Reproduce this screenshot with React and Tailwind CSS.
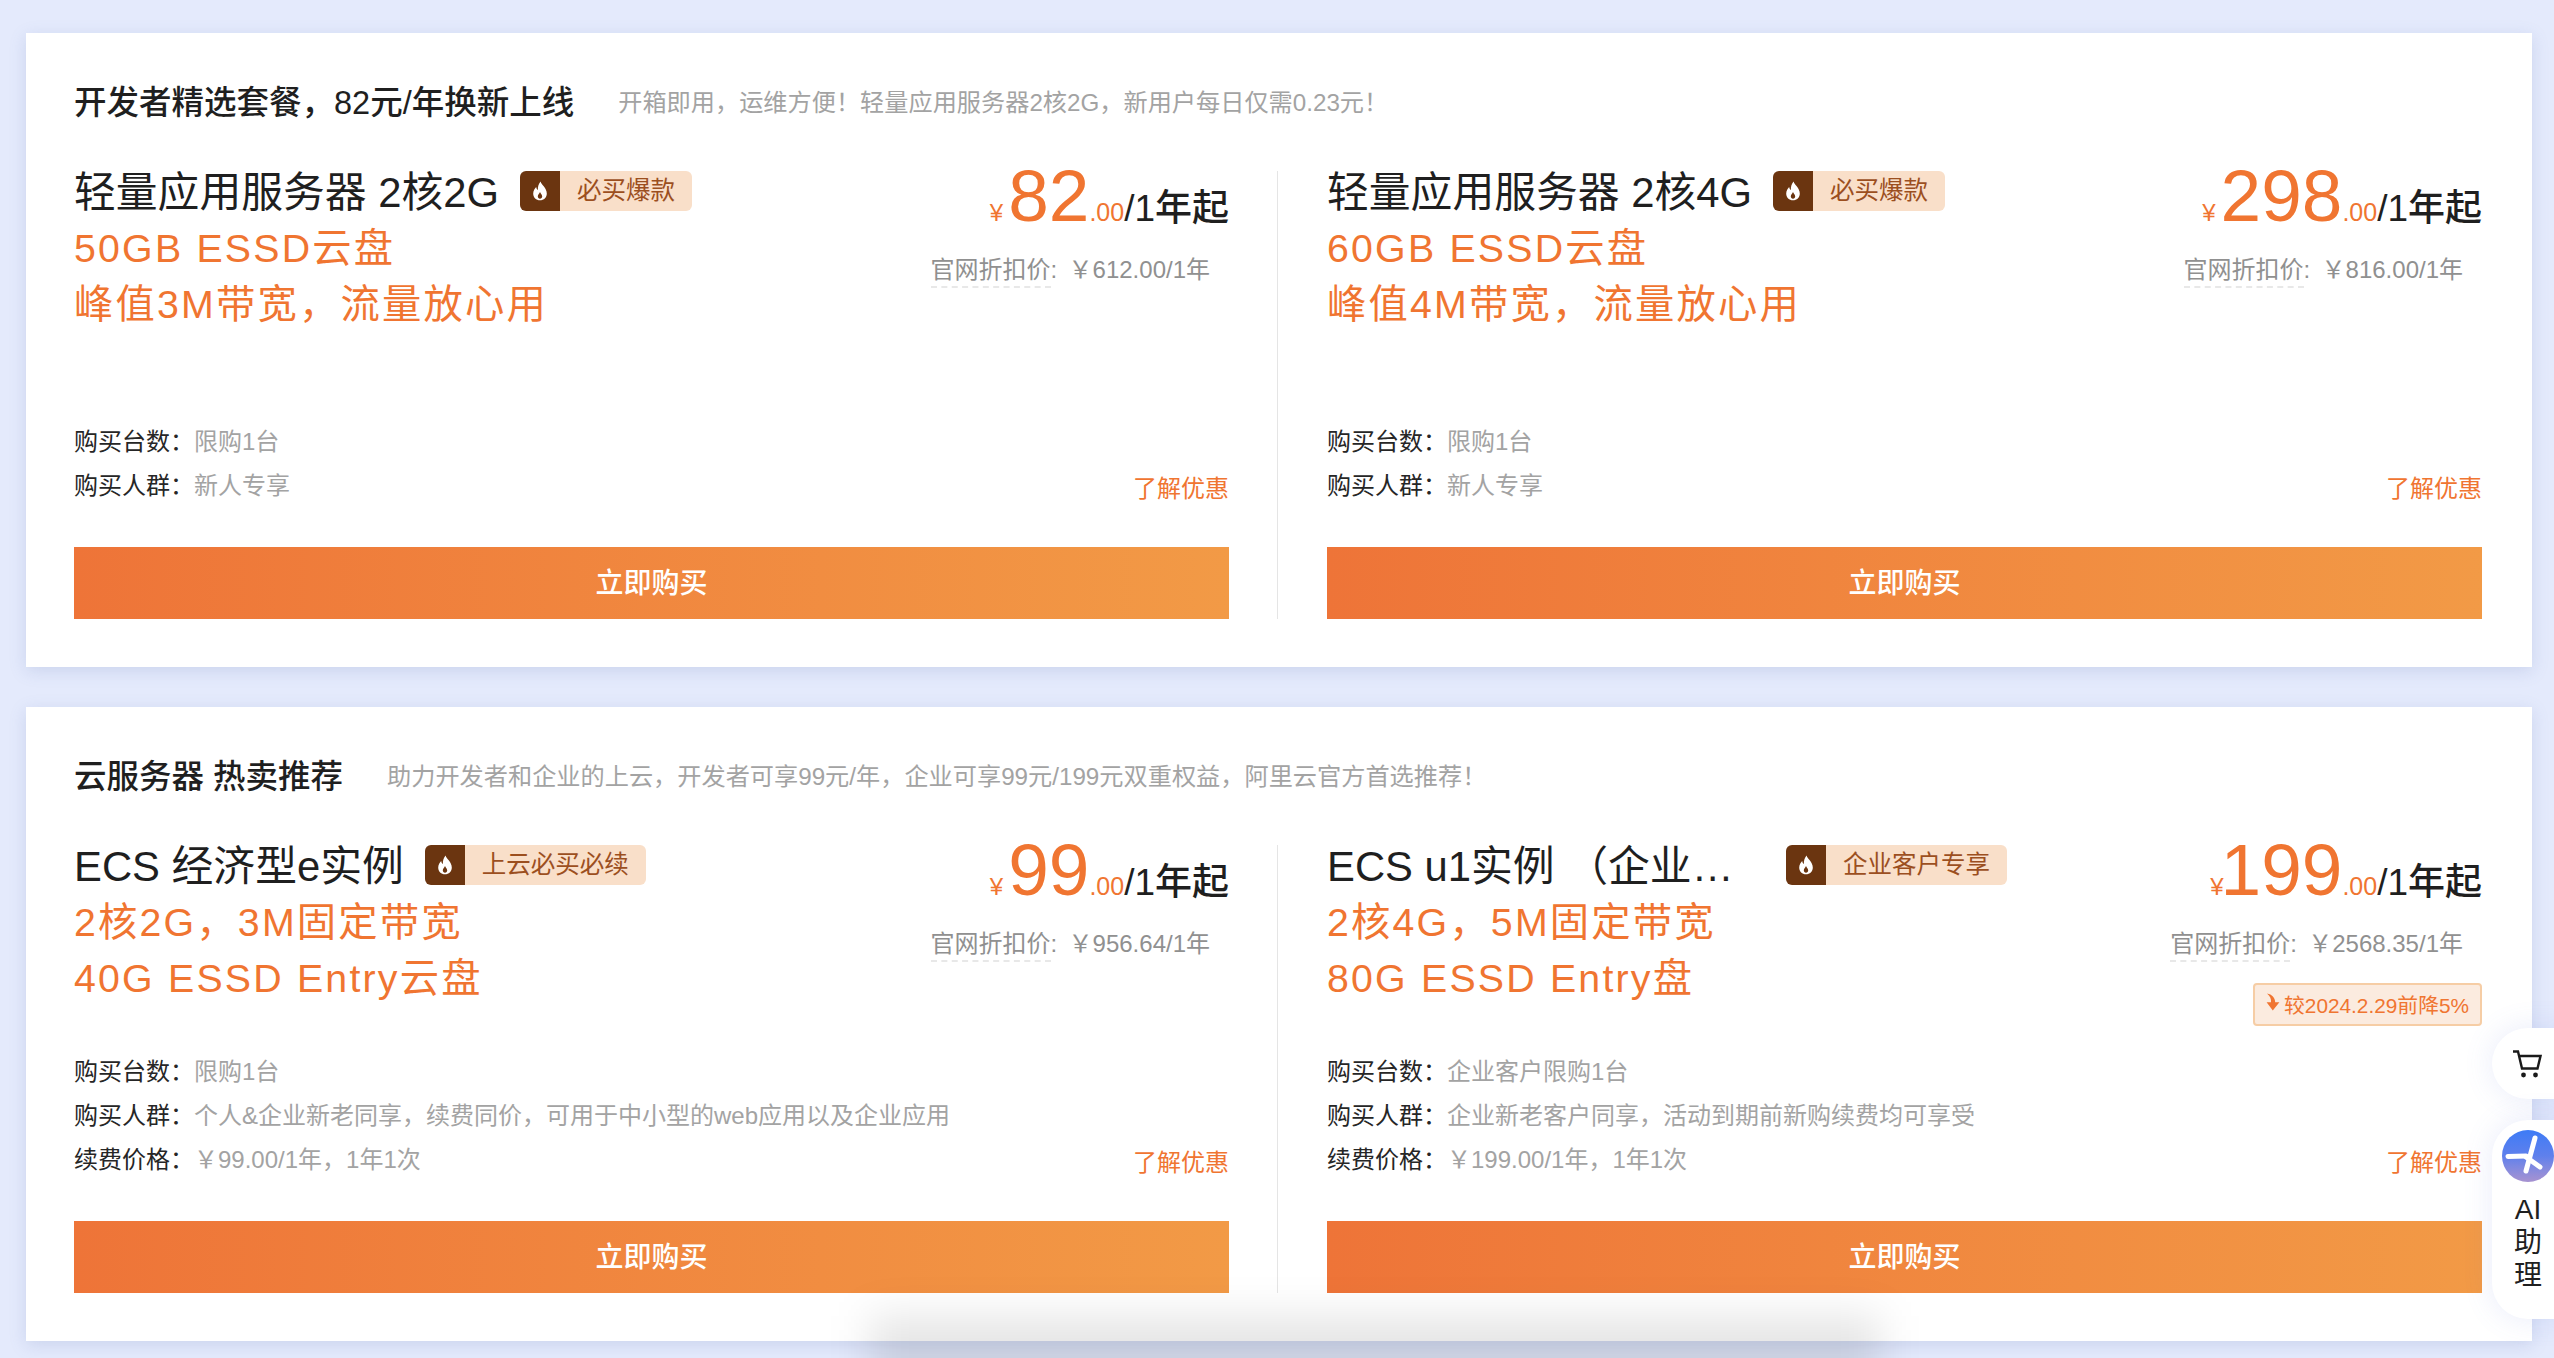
const FONT = 'font-["Liberation_Sans","Noto_Sans_CJK_SC",sans-serif]';

const FlameIcon = () => (
    <svg width="16" height="20" viewBox="0 0 16 20" fill="none">
        <path d="M8.6 0.5C9.2 3.6 14.8 7 14.8 12.4C14.8 16.4 11.8 19.2 8 19.2C4.2 19.2 1.2 16.4 1.2 12.4C1.2 9.6 2.8 7.6 4.2 6C4.4 7.6 5 8.6 5.9 9C5.6 5.8 6.8 2.6 8.6 0.5Z" fill="#fff" />
        <path d="M8 11C8.8 12.8 10.2 13.6 10.2 15.6C10.2 16.8 9.3 17.8 8 17.8C6.7 17.8 5.8 16.8 5.8 15.6C5.8 13.8 7.2 12.8 8 11Z" fill="#6b3510" />
    </svg>
);

const DownArrow = () => (
    <svg width="14" height="18" viewBox="0 0 14 18" fill="#f07531" className="-mt-[6px]">
        <path d="M1 0.5C6 1.5 9 4.5 9.2 9.2H13.4L6.8 17.5L0.6 9.2H5C5.4 6 4 3 1 0.5Z" />
    </svg>
);

const CartIcon = () => (
    <svg width="29" height="28" viewBox="0 0 29 28" fill="none" stroke="#1a1a1a" strokeWidth="2.4">
        <path d="M0 1.5H5L9 18.5H24.5L27.5 6H6" />
        <circle cx="10.5" cy="25" r="2.4" fill="#1a1a1a" stroke="none" />
        <circle cx="22.5" cy="25" r="2.4" fill="#1a1a1a" stroke="none" />
    </svg>
);

const AiLogo = () => (
    <div className="w-[52px] h-[52px] rounded-full bg-gradient-to-b from-[#3c7bf6] via-[#5f80ec] to-[#a792d0]">
        <svg width="52" height="52" viewBox="0 0 52 52" fill="none" stroke="#fff" strokeWidth="5" strokeLinecap="round">
            <path d="M6 26.5L24 26" />
            <path d="M33 8L24 41" />
            <path d="M24 27L38 37" />
        </svg>
    </div>
);

const plans = [
    [
        {
            title: '轻量应用服务器 2核2G', tag: '必买爆款', lines: ['50GB ESSD云盘', '峰值3M带宽，流量放心用'],
            price: '82', yenGap: 'mr-[5px]', official: '￥612.00/1年',
            info: [['购买台数：', '限购1台'], ['购买人群：', '新人专享']],
        },
        {
            title: '轻量应用服务器 2核4G', tag: '必买爆款', lines: ['60GB ESSD云盘', '峰值4M带宽，流量放心用'],
            price: '298', yenGap: 'mr-[5px]', official: '￥816.00/1年',
            info: [['购买台数：', '限购1台'], ['购买人群：', '新人专享']],
        },
    ],
    [
        {
            title: 'ECS 经济型e实例', tag: '上云必买必续', lines: ['2核2G，3M固定带宽', '40G ESSD Entry云盘'],
            price: '99', yenGap: 'mr-[5px]', official: '￥956.64/1年',
            info: [['购买台数：', '限购1台'], ['购买人群：', '个人&企业新老同享，续费同价，可用于中小型的web应用以及企业应用'], ['续费价格：', '￥99.00/1年，1年1次']],
        },
        {
            title: 'ECS u1实例 （企业客户专享）', tag: '企业客户专享', lines: ['2核4G，5M固定带宽', '80G ESSD Entry盘'],
            price: '199', yenGap: '-mr-[3px]', official: '￥2568.35/1年', drop: '较2024.2.29前降5%',
            info: [['购买台数：', '企业客户限购1台'], ['购买人群：', '企业新老客户同享，活动到期前新购续费均可享受'], ['续费价格：', '￥199.00/1年，1年1次']],
        },
    ],
];

const PlanColumn = ({ plan }) => (
    <div className="flex-1 min-w-0 h-[448px] flex flex-col">
        <div className="flex-1 flex justify-between min-h-0">
            {/* left: name, specs, purchase limits */}
            <div className="flex flex-col justify-between min-w-0 flex-1">
                <div>
                    <div className="flex items-center h-[40px]">
                        <span className="max-w-[438px] truncate pt-[4px] text-[41.8px] leading-[56px] text-[#1f1f1f]">{plan.title}</span>
                        <div className="ml-[21px] flex h-[40px] rounded-[6px] overflow-hidden shrink-0">
                            <span className="w-[40px] bg-[#6b3510] flex items-center justify-center"><FlameIcon /></span>
                            <span className="bg-[#f9dfc9] text-[#9c4f1f] text-[24.5px] leading-[40px] px-[17px]">{plan.tag}</span>
                        </div>
                    </div>
                    <div className="mt-[9px] text-[39.3px] tracking-[2.2px] leading-[56px] text-[#f07531]">
                        {plan.lines.map((line) => <div key={line}>{line}</div>)}
                    </div>
                </div>
                <div className="-mb-[2px]">
                    {plan.info.map(([label, value]) => (
                        <div key={label} className="flex text-[24px] leading-[44px] whitespace-nowrap">
                            <span className="text-[#262626] w-[120px] shrink-0">{label}</span>
                            <span className="text-[#a3a3a3]">{value}</span>
                        </div>
                    ))}
                </div>
            </div>
            {/* right: price block and link */}
            <div className="flex flex-col items-end justify-between shrink-0">
                <div className="flex flex-col items-end">
                    <div className="flex items-baseline -mt-[10px] h-[70px] leading-[70px] text-[#f07531]">
                        <span className={`text-[24px] ${plan.yenGap}`}>¥</span>
                        <span className="text-[73px]">{plan.price}</span>
                        <span className="text-[25px]">.00</span>
                        <span className="text-[37px] font-medium text-[#1f1f1f]">/1年起</span>
                    </div>
                    <div className="mt-[23px] pr-[19px] flex text-[24px] leading-[32px] text-[#909090]">
                        <span className="w-[120px] border-b-2 border-dashed border-[#e8e8e8] h-[34px]">官网折扣价</span>
                        <span className="w-[18px]">:</span>
                        <span>{plan.official}</span>
                    </div>
                    {plan.drop && (
                        <div className="mt-[21px] h-[43px] flex items-center gap-[4px] px-[11px] border-2 border-[#f6cda5] bg-[#fbebdf] rounded-[4px] text-[20.8px] text-[#f07531]">
                            <DownArrow />
                            <span className="pt-[3px]">{plan.drop}</span>
                        </div>
                    )}
                </div>
                <a className="text-[24px] leading-[34px] text-[#f07531]">了解优惠</a>
            </div>
        </div>
        <button className="mt-[41px] h-[72px] pt-[2px] shrink-0 bg-gradient-to-r from-[#ee7438] to-[#f29a46] text-white text-[28px] font-medium">立即购买</button>
    </div>
);

const Section = ({ title, sub, items }) => (
    <section className="h-[634px] pt-[48px] pl-[48px] pr-[50px] bg-white shadow-[0_4px_16px_rgba(90,110,170,0.18)]">
        <div className="flex items-center h-[42px] pt-[3px]">
            <h2 className="text-[32.5px] font-medium text-[#1f1f1f]">{title}</h2>
            <span className="ml-[44px] text-[24.2px] text-[#a3a3a3]">{sub}</span>
        </div>
        <div className="mt-[48px] flex">
            <PlanColumn plan={items[0]} />
            <div className="w-px h-[448px] ml-[48px] mr-[49px] bg-[#e5e5e5]" />
            <PlanColumn plan={items[1]} />
        </div>
    </section>
);

export default function App() {
    return (
        <div className={`relative h-[1358px] overflow-hidden bg-[#e4eafc] pt-[33px] pl-[26px] pr-[22px] flex flex-col gap-[40px] ${FONT}`}>
            <Section title="开发者精选套餐，82元/年换新上线" sub="开箱即用，运维方便！轻量应用服务器2核2G，新用户每日仅需0.23元！" items={plans[0]} />
            <Section title="云服务器 热卖推荐" sub="助力开发者和企业的上云，开发者可享99元/年，企业可享99元/199元双重权益，阿里云官方首选推荐！" items={plans[1]} />

            {/* shadow of the bar sitting just under the viewport */}
            <div className="absolute left-[870px] top-[1316px] w-[1010px] h-[120px] bg-black/10 blur-[20px]" />

            {/* floating widgets */}
            <div className="absolute left-[2492px] top-[1028px] w-[80px] h-[71px] pl-[21px] flex items-center rounded-l-[36px] bg-white shadow-[0_0_30px_rgba(100,120,220,0.14)]">
                <CartIcon />
            </div>
            <div className="absolute left-[2492px] top-[1120px] w-[80px] h-[199px] pt-[10px] pl-[10px] rounded-l-[36px] bg-white shadow-[0_0_30px_rgba(100,120,220,0.14)]">
                <AiLogo />
                <div className="mt-[11px] w-[52px] text-center text-[28px] leading-[33px] text-[#1f1f1f]">
                    <div>AI</div>
                    <div>助</div>
                    <div>理</div>
                </div>
            </div>
        </div>
    );
}
